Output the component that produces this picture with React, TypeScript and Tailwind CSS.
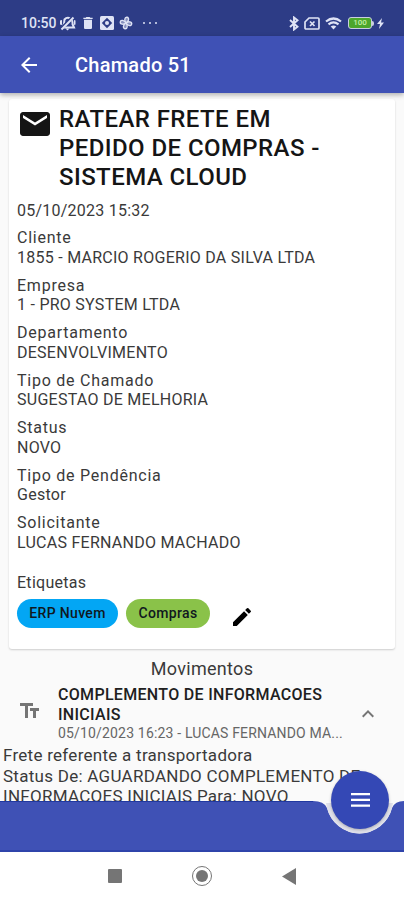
import React from 'react';
import { MdArrowBack, MdDelete, MdEdit, MdEmail, MdFormatSize, MdKeyboardArrowUp } from 'react-icons/md';

interface Field {
  label: string;
  value: string;
}

const fields: Field[] = [
  { label: 'Cliente', value: '1855 - MARCIO ROGERIO DA SILVA LTDA' },
  { label: 'Empresa', value: '1 - PRO SYSTEM LTDA' },
  { label: 'Departamento', value: 'DESENVOLVIMENTO' },
  { label: 'Tipo de Chamado', value: 'SUGESTAO DE MELHORIA' },
  { label: 'Status', value: 'NOVO' },
  { label: 'Tipo de Pendência', value: 'Gestor' },
  { label: 'Solicitante', value: 'LUCAS FERNANDO MACHADO' },
];

function StatusBar() {
  return (
    <div className="h-9 shrink-0 bg-[#2d3c86] text-[#dfe3f5] flex items-center justify-between pl-[21px] pr-[20px] pt-[10px]">
      <div className="flex items-center">
        <span className="text-[14px] font-medium leading-4 w-[37px] whitespace-nowrap">10:50</span>
        {/* silenced bell */}
        <svg className="w-[17px] h-[15px] ml-[1px]" viewBox="0 0 17 15">
          <path d="M5.500 3.500Q8 .5 11.500 2.500Q14 4.500 13.500 8L15 11.500H3.500L5 8z" fill="none" stroke="currentColor" strokeWidth="2" />
          <path d="M6.500 12.500h4L8.500 14.500zM1 4.500 3 4v5L1 8.500zM15 4l1.500.5v4L15 9z" fill="currentColor" />
          <path d="M2.500 12.500 13.500 1.500" stroke="#2d3c86" strokeWidth="3.200" />
          <path d="M2.500 13.500 14.500 1.500" stroke="currentColor" strokeWidth="2" />
        </svg>
        <MdDelete className="w-[16px] h-[16px] ml-[4px]" />
        <svg className="w-[14px] h-[14px] ml-[4px]" viewBox="0 0 14 14">
          <rect width="14" height="14" rx="1.5" fill="currentColor" />
          <path d="M7 1.800 12.200 7 7 12.200 1.800 7z" fill="#2d3c86" />
          <circle cx="7" cy="7" r="2" fill="currentColor" />
        </svg>
        {/* fan */}
        <svg className="w-[14px] h-[14px] ml-[5px]" viewBox="0 0 14 14" fill="currentColor" fillOpacity="0.5" stroke="currentColor" strokeWidth="1.300">
          <g transform="rotate(15 7 7)">
            <path d="M7 7C4.500 5.500 4 1.500 6.500 1.200S9.500 4.500 7 7z" />
            <path d="M7 7C4.500 5.500 4 1.500 6.500 1.200S9.500 4.500 7 7z" transform="rotate(90 7 7)" />
            <path d="M7 7C4.500 5.500 4 1.500 6.500 1.200S9.500 4.500 7 7z" transform="rotate(180 7 7)" />
            <path d="M7 7C4.500 5.500 4 1.500 6.500 1.200S9.500 4.500 7 7z" transform="rotate(270 7 7)" />
          </g>
        </svg>
        <div className="flex gap-[4px] ml-[10px]">
          <i className="w-[2px] h-[2px] rounded-[1px] bg-current" />
          <i className="w-[2px] h-[2px] rounded-[1px] bg-current" />
          <i className="w-[2px] h-[2px] rounded-[1px] bg-current" />
        </div>
      </div>
      <div className="flex items-center">
        <svg className="w-[10px] h-[15px] mr-[5px]" viewBox="0 0 10 15" fill="none" stroke="currentColor" strokeWidth="1.900">
          <path d="M1 4 8.500 10.700 5 13.500V1.500L8.500 4.300 1 11" />
        </svg>
        <svg className="w-[16px] h-[13px]" viewBox="0 0 16 13" fill="none" stroke="currentColor" strokeWidth="1.700">
          <path d="M5 1h9q1 0 1 1v9q0 1-1 1H2q-1 0-1-1V5z" />
          <path d="M6 4.500l4.500 4.500M10.500 4.500 6 9" />
        </svg>
        <svg className="w-[17px] h-[13px] ml-[5px]" viewBox="0 0 17 13" fill="none" stroke="currentColor" strokeWidth="2.200">
          <path d="M1 4.500q7.500-6 15 0M3.500 7.300q5-4 10 0" />
          <path d="M5.700 9.400q2.800-2 5.600 0L8.500 12.500z" fill="currentColor" stroke="none" />
        </svg>
        <div className="w-[24px] h-[12px] ml-[6px] rounded-[3px] border-[1.5px] border-[#c9cee0] bg-[#4ca62c] text-[8px] leading-[10px] text-center font-medium text-[#c4f0a6]">100</div>
        <i className="w-[2px] h-[5px] rounded-r bg-[#c9cee0]" />
        <svg className="w-[7px] h-[11px] ml-[3px]" viewBox="0 0 7 11" fill="currentColor">
          <path d="M5 0 0 6h3L2 11l5-6.500H4z" />
        </svg>
      </div>
    </div>
  );
}

function TicketCard() {
  return (
    <section className="mx-[9px] mt-[7px] h-[550px] shrink-0 rounded-[3px] bg-white shadow-[0_1px_2px_rgba(0,0,0,0.18)] pl-2 text-[#3a3a3a]">
      <div className="flex pt-[6px]">
        <MdEmail className="w-[36px] h-[36px] text-[#151515] shrink-0 mt-px" />
        <h1 className="ml-[6px] text-[24px] leading-[28.800px] tracking-[0.420px] font-medium text-[#151515] whitespace-nowrap">
          RATEAR FRETE EM<br />PEDIDO DE COMPRAS -<br />SISTEMA CLOUD
        </h1>
      </div>
      <p className="mt-[10px] text-[16px] leading-5 tracking-[0.240px]">05/10/2023 15:32</p>
      <div className="mt-[7px] flex flex-col gap-[8.450px]">
        {fields.map((f) => (
          <div key={f.label} className="text-[16px] leading-[19.500px] whitespace-nowrap">
            <div className="tracking-[0.760px]">{f.label}</div>
            <div className="tracking-[0.260px]">{f.value}</div>
          </div>
        ))}
      </div>
      <p className="mt-[21px] text-[16px] leading-5 tracking-[0.280px]">Etiquetas</p>
      <div className="mt-[4px] flex items-center text-[14px] font-medium tracking-[0.330px] text-[#101820]">
        <span className="w-[101px] h-[29px] rounded-full bg-[#03a6f4] flex items-center justify-center">ERP Nuvem</span>
        <span className="w-[84px] h-[29px] ml-[8px] rounded-full bg-[#8ac249] flex items-center justify-center">Compras</span>
        <MdEdit className="w-[24px] h-[24px] ml-[20px] mt-[8px] text-black" />
      </div>
    </section>
  );
}

function Movements() {
  return (
    <section className="flex flex-col text-[#3a3a3a]">
      <h2 className="mt-[9px] text-center text-[18px] leading-[22px] tracking-[0.300px]">Movimentos</h2>
      <div className="mt-[5px] flex items-center pl-[18px] pr-[24px]">
        <MdFormatSize className="w-[24px] h-[24px] -scale-x-100 -mt-[6px] text-[#757575] shrink-0" />
        <div className="ml-[16px] w-[290px] whitespace-nowrap">
          <div className="text-[16px] leading-[19.500px] tracking-[0.310px] font-medium text-[#202020]">COMPLEMENTO DE INFORMACOES<br />INICIAIS</div>
          <div className="text-[14px] leading-[18px] tracking-[0.170px] text-[#666]">05/10/2023 16:23 - LUCAS FERNANDO MA...</div>
        </div>
        <MdKeyboardArrowUp className="w-[24px] h-[24px] ml-[8px] text-[#757575] shrink-0" />
      </div>
      <div className="mt-[3px] ml-[3px] text-[17px] leading-[20.500px] tracking-[0.270px] whitespace-nowrap">
        Frete referente a transportadora<br />
        Status De: AGUARDANDO COMPLEMENTO DE<br />
        INFORMACOES INICIAIS Para: NOVO
      </div>
    </section>
  );
}

function BottomBar() {
  return (
    <div className="relative h-[51px] shrink-0">
      {/* bar outline with the notch cut around the menu button */}
      <svg className="block w-full h-[51px]" viewBox="0 0 404 51">
        <path d="M0 0H313Q324 0 327 7A33.500 33.500 0 0 0 392 7Q395 0 404 0V51H0z" fill="#3f51b5" />
        <path d="M326 2L327 7A33.500 33.500 0 0 0 392 7L393 2z" fill="#dfe0ea" />
        <path d="M0 .5H313M0 50H404" stroke="#2038a0" />
      </svg>
      <button className="absolute left-[331px] -top-[30px] w-[58px] h-[58px] rounded-full bg-[#3448b5] shadow-[0_1px_3px_rgba(0,0,0,0.25)] text-white flex items-center justify-center">
        <svg className="w-[19px] h-[14px]" viewBox="0 0 19 14" fill="currentColor">
          <path d="M0 0h19v2.200H0zM0 5.800h19v2.200H0zM0 11.600h19v2.200H0z" />
        </svg>
      </button>
    </div>
  );
}

function SystemNav() {
  return (
    <div className="h-[48px] shrink-0 bg-white text-[#757575] flex items-center pl-[108px]">
      <i className="w-[14px] h-[14px] rounded-[1px] bg-current" />
      <div className="w-[20px] h-[20px] ml-[70px] rounded-full border-[1.5px] border-current flex items-center justify-center">
        <i className="w-[12px] h-[12px] rounded-full bg-current" />
      </div>
      <svg className="w-[14px] h-[17px] ml-[70px]" viewBox="0 0 14 17" fill="currentColor">
        <path d="M14 0v17L0 8.500z" />
      </svg>
    </div>
  );
}

export default function App() {
  return (
    <div className="w-[404px] h-[900px] flex flex-col overflow-hidden bg-[#fafafa] font-['Roboto',sans-serif]">
      <StatusBar />
      <header className="relative z-10 h-[57px] shrink-0 bg-[#3f51b5] text-white flex items-center pl-[17px] shadow-[0_2px_5px_rgba(0,0,0,0.3)]">
        <MdArrowBack className="w-[24px] h-[24px]" />
        <h1 className="ml-[34px] text-[20px] font-medium tracking-[0.250px]">Chamado 51</h1>
      </header>
      <main className="-mt-px flex-1 min-h-0 overflow-hidden flex flex-col">
        <TicketCard />
        <Movements />
      </main>
      <BottomBar />
      <SystemNav />
    </div>
  );
}
